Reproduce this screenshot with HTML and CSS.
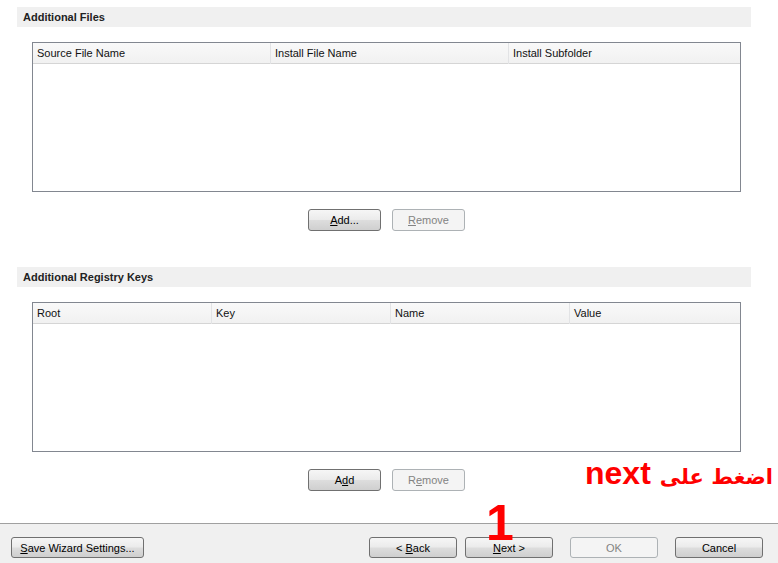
FILE: index.html
```html
<!DOCTYPE html>
<html lang="en">
<head>
    <meta charset="UTF-8">
    <title>Deployment Wizard</title>
    <link rel="stylesheet" href="styles.css">
</head>
<body>
    <div class="content">
        <div class="section">
            <div class="section-title">Additional Files</div>
            <div class="grid">
                <div class="grid-head cols-3">
                    <div class="col">Source File Name</div>
                    <div class="col">Install File Name</div>
                    <div class="col">Install Subfolder</div>
                </div>
            </div>
            <div class="grid-buttons">
                <button class="btn"><u>A</u>dd...</button>
                <button class="btn" disabled><u>R</u>emove</button>
            </div>
        </div>

        <div class="section">
            <div class="section-title">Additional Registry Keys</div>
            <div class="grid">
                <div class="grid-head cols-4">
                    <div class="col">Root</div>
                    <div class="col">Key</div>
                    <div class="col">Name</div>
                    <div class="col">Value</div>
                </div>
            </div>
            <div class="grid-buttons">
                <button class="btn">A<u>d</u>d</button>
                <button class="btn" disabled>R<u>e</u>move</button>
            </div>
        </div>

        <div class="note" dir="rtl"><span class="note-ar">اضغط على</span> next</div>
    </div>

    <div class="footer">
        <button class="btn btn-save"><u>S</u>ave Wizard Settings...</button>
        <div class="footer-right">
            <button class="btn btn-nav">&lt; <u>B</u>ack</button>
            <button class="btn btn-nav btn-next"><u>N</u>ext &gt;<span class="step">1</span></button>
            <button class="btn btn-nav btn-ok" disabled>OK</button>
            <button class="btn btn-nav">Cancel</button>
        </div>
    </div>
</body>
</html>
```

FILE: styles.css
```css
html, body { margin: 0; padding: 0; background: #fff; }
body { width: 778px; height: 563px; overflow: hidden; font-family: "Liberation Sans", Arial, sans-serif; font-size: 11px; color: #000; }

.content { position: relative; height: 523px; padding: 7px 27px 0 17px; box-sizing: border-box; }

.section { margin-bottom: 36px; }
.section-title { height: 20px; line-height: 21px; padding-left: 6px; background: #f0f0f0; font-weight: bold; color: #222; }

.grid { margin: 15px 10px 0 15px; height: 150px; border: 1px solid #828790; box-sizing: border-box; background: #fff; }
.grid-head { display: grid; height: 20px; background: linear-gradient(#f9f9f9, #f1f1f1); border-bottom: 1px solid #d5d5d5; }
.cols-3 { grid-template-columns: 238px 238px 1fr; }
.cols-4 { grid-template-columns: 179px 179px 179px 1fr; }
.col { line-height: 21px; padding-left: 4px; border-right: 1px solid #e2e3e5; color: #111; white-space: nowrap; }
.col:last-child { border-right: none; }

.grid-buttons { display: flex; justify-content: center; gap: 11px; margin-top: 17px; padding-left: 5px; }

.btn { font-family: inherit; font-size: 11px; height: 22px; padding: 0; border: 1px solid #707070; border-radius: 3px; background: linear-gradient(#f6f6f6 0%, #ebebeb 48%, #dddddd 52%, #cfcfcf 100%); color: #000; cursor: default; }
.grid-buttons .btn { width: 73px; }
.btn:disabled { border-color: #adb2b5; background: #f4f4f4; color: #838383; }

.note { position: absolute; right: 5px; top: 455px; font-size: 32px; font-weight: bold; color: #f00; white-space: nowrap; font-family: "Liberation Sans", "DejaVu Sans", sans-serif; }
.note-ar { font-family: "DejaVu Sans", sans-serif; font-size: 21px; }

.footer { display: flex; justify-content: space-between; height: 40px; padding: 13px 15px 0 11px; box-sizing: border-box; border-top: 1px solid #a0a0a0; background: #f0f0f0; }
.btn-save { width: 133px; height: 21px; }
.footer-right { display: flex; gap: 8px; }
.btn-nav { width: 88px; height: 21px; }
.btn-ok { margin-left: 9px; margin-right: 9px; }
.btn-next { position: relative; }
.step { position: absolute; left: 20px; top: -40px; font-size: 50px; font-weight: bold; color: #f00; line-height: 1; }
```
